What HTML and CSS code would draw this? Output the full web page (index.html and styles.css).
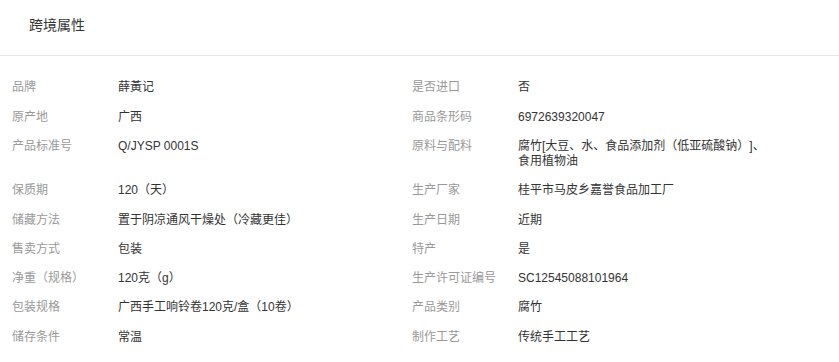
FILE: index.html
```html
<!DOCTYPE html>
<html lang="zh">
<head>
<meta charset="utf-8">
<link rel="stylesheet" href="styles.css">
</head>
<body>
<div class="panel">
  <div class="header">跨境属性</div>
  <div class="attrs">
    <div class="item"><span class="label">品牌</span><span class="value">薛黃记</span></div>
    <div class="item"><span class="label">是否进口</span><span class="value">否</span></div>
    <div class="item"><span class="label">原产地</span><span class="value">广西</span></div>
    <div class="item"><span class="label">商品条形码</span><span class="value">6972639320047</span></div>
    <div class="item"><span class="label">产品标准号</span><span class="value">Q/JYSP 0001S</span></div>
    <div class="item"><span class="label">原料与配料</span><span class="value">腐竹[大豆、水、食品添加剂（低亚硫酸钠）]、食用植物油</span></div>
    <div class="item"><span class="label">保质期</span><span class="value">120（天）</span></div>
    <div class="item"><span class="label">生产厂家</span><span class="value">桂平市马皮乡嘉誉食品加工厂</span></div>
    <div class="item"><span class="label">储藏方法</span><span class="value">置于阴凉通风干燥处（冷藏更佳）</span></div>
    <div class="item"><span class="label">生产日期</span><span class="value">近期</span></div>
    <div class="item"><span class="label">售卖方式</span><span class="value">包装</span></div>
    <div class="item"><span class="label">特产</span><span class="value">是</span></div>
    <div class="item"><span class="label">净重（规格）</span><span class="value">120克（g）</span></div>
    <div class="item"><span class="label">生产许可证编号</span><span class="value">SC12545088101964</span></div>
    <div class="item"><span class="label">包装规格</span><span class="value">广西手工响铃卷120克/盒（10卷）</span></div>
    <div class="item"><span class="label">产品类别</span><span class="value">腐竹</span></div>
    <div class="item"><span class="label">储存条件</span><span class="value">常温</span></div>
    <div class="item"><span class="label">制作工艺</span><span class="value">传统手工工艺</span></div>
  </div>
</div>
</body>
</html>
```

FILE: styles.css
```css
html, body {
  margin: 0;
  padding: 0;
  background: #fff;
}
body {
  font-family: "Liberation Sans", "Noto Sans CJK SC", sans-serif;
  color: #333;
  text-spacing-trim: space-all;
}
.header {
  height: 38px;
  padding: 17px 0 0 29px;
  font-size: 14px;
  line-height: 16px;
  color: #333;
  border-bottom: 1px solid #e8e8e8;
}
.attrs {
  display: grid;
  grid-template-columns: 400px 400px;
  padding: 17.3px 0 0 12px;
}
.item {
  display: flex;
  font-size: 12px;
  line-height: 15px;
  padding: 7.2px 0 7.1px;
}
.label {
  width: 106px;
  flex: none;
  color: #999;
}
.value {
  width: 257px;
  color: #333;
  line-break: anywhere;
}
```
